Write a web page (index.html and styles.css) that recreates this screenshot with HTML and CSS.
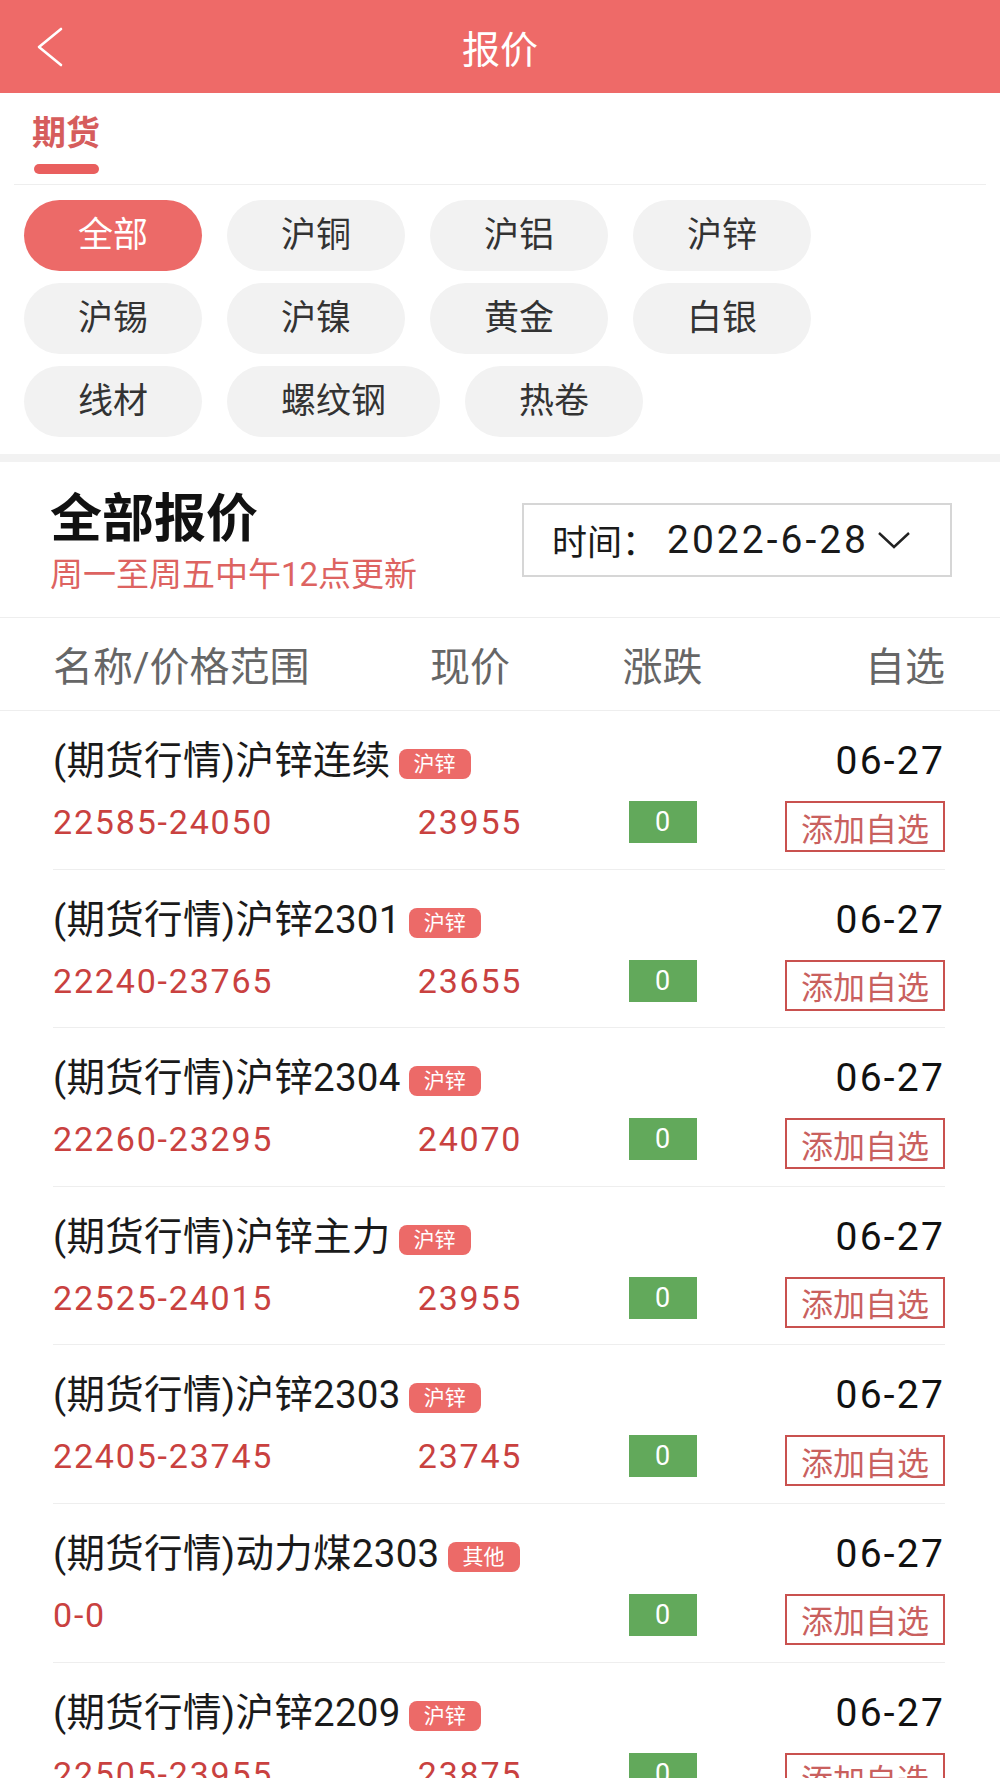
FILE: index.html
```html
<!DOCTYPE html>
<html lang="zh-CN">
<head>
    <meta charset="UTF-8">
    <meta name="viewport" content="width=device-width, initial-scale=1.0">
    <title>报价</title>
    <link rel="stylesheet" href="styles.css">
</head>
<body>
    <header class="topbar">
        <a class="back" href="#">
            <svg width="28" height="40" viewBox="0 0 28 40"><path d="M25 2 L3 20 L25 38" fill="none" stroke="#fff" stroke-width="2.6" stroke-linecap="round" stroke-linejoin="round"/></svg>
        </a>
        <h1>报价</h1>
        <span></span>
    </header>

    <nav class="tabs">
        <div class="tab active">
            <span>期货</span>
            <i></i>
        </div>
    </nav>

    <section class="chips">
        <span class="chip active">全部</span>
        <span class="chip">沪铜</span>
        <span class="chip">沪铝</span>
        <span class="chip">沪锌</span>
        <span class="chip">沪锡</span>
        <span class="chip">沪镍</span>
        <span class="chip">黄金</span>
        <span class="chip">白银</span>
        <span class="chip">线材</span>
        <span class="chip">螺纹钢</span>
        <span class="chip">热卷</span>
    </section>

    <section class="summary">
        <div>
            <h2>全部报价</h2>
            <p>周一至周五中午12点更新</p>
        </div>
        <div class="datebox">
            <span class="label">时间：</span>
            <span class="date">2022-6-28</span>
            <svg width="34" height="18" viewBox="0 0 34 18"><path d="M2 2 L17 16 L32 2" fill="none" stroke="#222" stroke-width="2.4"/></svg>
        </div>
    </section>

    <div class="colhead">
        <span>名称/价格范围</span>
        <span class="mid">现价</span>
        <span class="mid">涨跌</span>
        <span class="end">自选</span>
    </div>

    <div class="list">
        <div class="row">
            <div class="name">(期货行情)沪锌连续<span class="tag">沪锌</span></div>
            <div class="day">06-27</div>
            <div class="range">22585-24050</div>
            <div class="price">23955</div>
            <div class="change"><span>0</span></div>
            <div class="act"><button>添加自选</button></div>
        </div>
        <div class="row">
            <div class="name">(期货行情)沪锌2301<span class="tag">沪锌</span></div>
            <div class="day">06-27</div>
            <div class="range">22240-23765</div>
            <div class="price">23655</div>
            <div class="change"><span>0</span></div>
            <div class="act"><button>添加自选</button></div>
        </div>
        <div class="row">
            <div class="name">(期货行情)沪锌2304<span class="tag">沪锌</span></div>
            <div class="day">06-27</div>
            <div class="range">22260-23295</div>
            <div class="price">24070</div>
            <div class="change"><span>0</span></div>
            <div class="act"><button>添加自选</button></div>
        </div>
        <div class="row">
            <div class="name">(期货行情)沪锌主力<span class="tag">沪锌</span></div>
            <div class="day">06-27</div>
            <div class="range">22525-24015</div>
            <div class="price">23955</div>
            <div class="change"><span>0</span></div>
            <div class="act"><button>添加自选</button></div>
        </div>
        <div class="row">
            <div class="name">(期货行情)沪锌2303<span class="tag">沪锌</span></div>
            <div class="day">06-27</div>
            <div class="range">22405-23745</div>
            <div class="price">23745</div>
            <div class="change"><span>0</span></div>
            <div class="act"><button>添加自选</button></div>
        </div>
        <div class="row">
            <div class="name">(期货行情)动力煤2303<span class="tag">其他</span></div>
            <div class="day">06-27</div>
            <div class="range">0-0</div>
            <div class="price"></div>
            <div class="change"><span>0</span></div>
            <div class="act"><button>添加自选</button></div>
        </div>
        <div class="row">
            <div class="name">(期货行情)沪锌2209<span class="tag">沪锌</span></div>
            <div class="day">06-27</div>
            <div class="range">22505-23955</div>
            <div class="price">23875</div>
            <div class="change"><span>0</span></div>
            <div class="act"><button>添加自选</button></div>
        </div>
    </div>
</body>
</html>
```

FILE: styles.css
```css
body {
    margin: 0;
    background: #fff;
    font-family: Roboto, "Noto Sans CJK SC", sans-serif;
    color: #1a1a1a;
}

.topbar {
    display: grid;
    grid-template-columns: 120px 1fr 120px;
    align-items: center;
    height: 93px;
    background: #ee6a68;
}

.back {
    display: flex;
    padding-left: 36px;
}

.topbar h1 {
    margin: 0;
    text-align: center;
    color: #fff;
    font-size: 38px;
    font-weight: 400;
}

.tabs {
    margin: 0 14px;
    padding: 20px 0 0 18px;
    height: 71px;
    border-bottom: 1px solid #eee;
}

.tab {
    display: inline-flex;
    flex-direction: column;
    align-items: center;
    gap: 11px;
}

.tab span {
    font-size: 34px;
    line-height: 40px;
    font-weight: 700;
    color: #d65d5c;
}

.tab i {
    width: 65px;
    height: 10px;
    border-radius: 5px;
    background: #e95f5e;
}

.chips {
    display: flex;
    flex-wrap: wrap;
    gap: 12px 25px;
    padding: 15px 24px 17px;
    border-bottom: 8px solid #f2f2f2;
}

.chip {
    padding: 0 54px;
    height: 71px;
    line-height: 71px;
    border-radius: 36px;
    background: #f2f2f2;
    color: #333;
    font-size: 35px;
}

.chip.active {
    background: #ec6a68;
    color: #fff;
}

.summary {
    display: flex;
    justify-content: space-between;
    align-items: center;
    height: 155px;
    padding: 0 48px 0 50px;
    border-bottom: 1px solid #eee;
}

.summary h2 {
    margin: 6px 0 0;
    font-size: 52px;
    line-height: 58px;
    font-weight: 700;
    color: #111;
}

.summary p {
    margin: 6px 0 0;
    font-size: 33px;
    line-height: 40px;
    color: #dd6361;
}

.datebox {
    display: flex;
    align-items: center;
    box-sizing: border-box;
    width: 430px;
    height: 74px;
    padding: 0 30px 0 28px;
    border: 2px solid #d6d6d6;
    font-size: 35px;
    color: #1a1a1a;
}

.datebox .date {
    margin: 0 8px 0 10px;
    font-size: 39px;
    letter-spacing: 3px;
}

.colhead {
    display: grid;
    grid-template-columns: 322px 190px 195px 1fr;
    align-items: center;
    height: 92px;
    padding: 0 55px 0 53px;
    border-bottom: 1px solid #eee;
    font-size: 40px;
    color: #666;
}

.colhead .mid {
    text-align: center;
}

.colhead .end {
    text-align: right;
}

.row {
    display: grid;
    grid-template-columns: 322px 190px 195px 1fr;
    grid-template-rows: 36px 51px;
    row-gap: 22px;
    box-sizing: border-box;
    height: 158.6px;
    margin: 0 55px 0 53px;
    padding-top: 32px;
    border-bottom: 1px solid #eee;
}

.name {
    grid-column: 1 / 4;
    display: flex;
    align-items: center;
    font-size: 38.5px;
    line-height: 36px;
    letter-spacing: 0.3px;
    color: #1a1a1a;
    white-space: nowrap;
}

.tag {
    margin-left: 8px;
    margin-top: 6px;
    padding: 0 15px;
    height: 30px;
    line-height: 30px;
    border-radius: 8px;
    background: #ec6a68;
    color: #fff;
    font-size: 21px;
    letter-spacing: 0;
}

.day {
    text-align: right;
    font-size: 39px;
    line-height: 36px;
    letter-spacing: 2.2px;
    color: #111;
}

.range,
.price {
    font-size: 34px;
    line-height: 42px;
    letter-spacing: 1.8px;
    color: #c9413f;
}

.price {
    text-align: center;
}

.change {
    text-align: center;
}

.change span {
    display: inline-block;
    width: 68px;
    height: 42px;
    line-height: 42px;
    background: #62a95b;
    color: #fff;
    font-size: 27px;
}

.act {
    text-align: right;
}

.act button {
    width: 160px;
    height: 51px;
    padding: 0;
    border: 2px solid #c9514f;
    background: #fff;
    color: #c9605e;
    font-family: inherit;
    font-size: 32px;
}
```
